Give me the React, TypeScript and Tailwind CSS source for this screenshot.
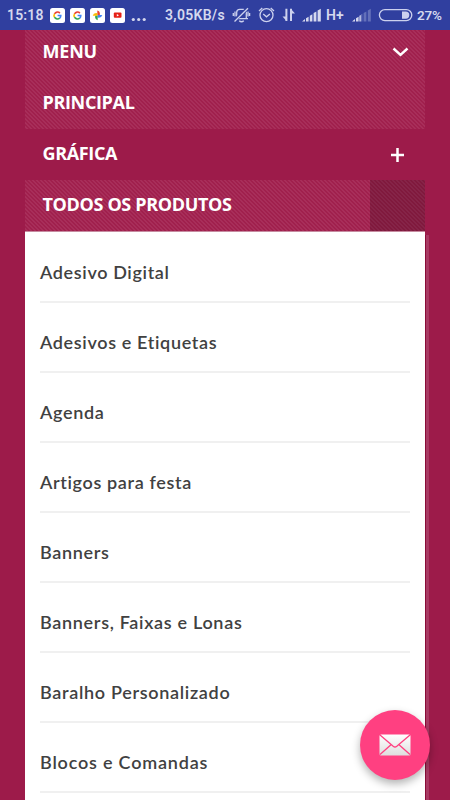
const products = [
  { name: "Adesivo Digital", spacing: "tracking-[0.64px]" },
  { name: "Adesivos e Etiquetas", spacing: "tracking-[0.65px]" },
  { name: "Agenda", spacing: "tracking-[0.66px]" },
  { name: "Artigos para festa", spacing: "tracking-[0.64px]" },
  { name: "Banners", spacing: "tracking-[0.66px]" },
  { name: "Banners, Faixas e Lonas", spacing: "tracking-[0.69px]" },
  { name: "Baralho Personalizado", spacing: "tracking-[0.69px]" },
  { name: "Blocos e Comandas", spacing: "tracking-[0.8px]" },
];

const hatch =
  "bg-[repeating-linear-gradient(45deg,#a0204d_0px,#a0204d_0.9px,#a82e5a_1.4px,#a82e5a_2.4px,#a0204d_2.828px)]";

function GoogleIcon({ x }: { x: number }) {
  return (
    <g transform={`translate(${x} 8)`} fill="none" strokeWidth="1.6">
      <rect width="15" height="15" rx="2.5" fill="#fff" />
      <path d="M9.9 5.1A3.4 3.4 0 0 0 4.5 5.8" stroke="#ea4335" />
      <path d="M4.5 5.8a3.4 3.4 0 0 0 0 3.4" stroke="#fbbc05" />
      <path d="M4.5 9.2a3.4 3.4 0 0 0 5.2.9" stroke="#34a853" />
      <path d="M9.7 10.1a3.4 3.4 0 0 0 1.1-2.6H7.6" stroke="#4285f4" />
    </g>
  );
}

function NotificationIcons() {
  return (
    <svg className="ml-[6px] shrink-0" width="98" height="30" viewBox="50 0 98 30">
      <GoogleIcon x={50} />
      <GoogleIcon x={70} />
      <rect x="90" y="8" width="15" height="15" rx="2.5" fill="#fff" />
      <path d="M97.3 15.2v-4.7q3.2.8 2.5 4.7z" fill="#ea4335" />
      <path d="M97.7 15h4.6q-.8 3.2-4.6 2.5z" fill="#4285f4" />
      <path d="M97.7 15.5v4.7q-3.2-.8-2.5-4.7z" fill="#34a853" />
      <path d="M97.3 15.7h-4.6q.8-3.2 4.6-2.5z" fill="#fbbc05" />
      <rect x="110" y="8" width="15" height="15" rx="2.5" fill="#fff" />
      <rect x="113.8" y="12.5" width="7.7" height="5.3" rx="1" fill="#e62117" />
      <path d="m116.8 13.9 2.2 1.3-2.2 1.3z" fill="#fff" />
      <g fill="#d5d8ee">
        <circle cx="133.3" cy="19.5" r="1.6" />
        <circle cx="138.7" cy="19.5" r="1.6" />
        <circle cx="144.2" cy="19.5" r="1.6" />
      </g>
    </svg>
  );
}

function StatusIcons() {
  return (
    <svg className="absolute left-[230px] top-0" width="190" height="30" viewBox="230 0 190 30" fill="none" stroke="#ccd1ee" strokeWidth="1.3">
      {/* muted bell */}
      <path d="M236.7 18.5v-6.2q0-3 3.2-3h3.2q3.2 0 3.2 3v6.2M235 18.7h13M239.2 20.7q2.3 2 4.6 0M235 11.5v5M248 11.5v5M233.3 13v3M249.6 13v3" />
      <path d="m234 21 14-13" stroke="#303f9f" strokeWidth="3.5" />
      <path d="m234.5 21.5 13.5-13.3" />
      {/* alarm */}
      <circle cx="266.5" cy="15.2" r="6.5" />
      <path d="m263.2 14 3.3 2.8 3.4-2.8M259 11l3.3-3M274 11l-3.3-3" />
      {/* data arrows */}
      <path d="M286.4 8.8v12.3M291 8.8v12.3" strokeWidth="2" />
      <path d="M282.5 16.5h4v4.6zM290.8 8.8l4.2 4.7h-4.2z" fill="#ccd1ee" stroke="none" />
      {/* first SIM */}
      <g fill="#d5d8ee" stroke="none">
        <path d="M302 21.5 305 19v2.5zM306 18.3l2.6-1.5v4.7H306zM309.8 15.8l2.6-1.6v7.3h-2.6zM313.6 13l2.8-1.6v10.1h-2.8zM317.6 10.5l3.2-1.7v12.7h-3.2z" />
      </g>
      {/* second SIM */}
      <g fill="#d5d8ee" stroke="none">
        <path d="M352 21.5 355 19v2.5zM356 18.3l2.6-1.5v4.7H356zM359.4 15.8l1.4-.8v6.5h-1.4z" />
        <path fill="#6370b9" d="M361 14.6l1.4-.8v7.7H361zM363.6 13l2.8-1.6v10.1h-2.8zM367.8 10.5l3-1.7v12.7h-3z" />
      </g>
      <rect x="379.4" y="9.6" width="32.4" height="11" rx="5.5" />
      <path d="M402 11.5h3.7a3.6 3.6 0 0 1 0 7.2H402z" fill="#ccd1ee" stroke="none" />
    </svg>
  );
}

function StatusBar() {
  return (
    <header className="relative flex h-[30px] shrink-0 items-center bg-[#303f9f] pl-[7px] font-['Roboto',sans-serif] text-[14px] font-semibold text-[#d5d8ee]">
      <span className="w-[37px] shrink-0 pt-px tracking-[0.15px]">15:18</span>
      <NotificationIcons />
      <span className="ml-[17px] w-[72px] whitespace-nowrap pt-px tracking-[0.3px]">3,05KB/s</span>
      <StatusIcons />
      <span className="ml-[89px] w-[25px] pt-px">H+</span>
      <span className="ml-[66px] pt-px text-[13.5px] tracking-[-0.2px]">27%</span>
    </header>
  );
}

function MenuHeader() {
  return (
    <nav className="whitespace-nowrap font-['Open_Sans',sans-serif] text-[18px] leading-none font-bold tracking-[-0.35px] text-white">
      <div className={`flex h-[99px] justify-between pl-[17.5px] pr-4 ${hatch}`}>
        <div className="flex flex-col gap-[33px] pt-3">
          <span className="tracking-[-0.2px]">MENU</span>
          <span>PRINCIPAL</span>
        </div>
        <svg className="mt-[15px]" width="17" height="14" viewBox="0 0 17 14" fill="none" stroke="#fff" strokeWidth="2.4">
          <path d="m1.5 3.5 7 6.3 7-6.3" />
        </svg>
      </div>
      <div className="flex h-[51px] items-center justify-between pl-[17.5px] pr-[21px]">
        <span className="pb-[3px]">GRÁFICA</span>
        <svg width="13" height="14" viewBox="0 0 13 14" stroke="#fff" strokeWidth="2.5">
          <path d="M0 7h13M6.5 0v14" />
        </svg>
      </div>
      <div className={`flex h-[51px] items-center justify-between pl-[17.5px] ${hatch}`}>
        <span className="pb-[3px]">TODOS OS PRODUTOS</span>
        <div className="h-full w-[55px] bg-black/20" />
      </div>
    </nav>
  );
}

function ProductList() {
  return (
    <ul className="h-[570px] border-t border-[#c68ba0] bg-white px-[15px] pt-px">
      {products.map(({ name, spacing }) => (
        <li
          key={name}
          className={`flex h-[70px] items-center whitespace-nowrap border-b-2 border-[#f0f0f0] pt-[11px] font-['Lato',sans-serif] text-[18px] font-semibold text-[#414141] ${spacing}`}
        >
          {name}
        </li>
      ))}
    </ul>
  );
}

function MailButton() {
  return (
    <button aria-label="Contato" className="absolute left-[360px] top-[710px] flex size-[70px] items-center justify-center rounded-full bg-[#ff4081] shadow-[0_4px_8px_rgba(0,0,0,0.3)]">
      <svg width="32" height="22" viewBox="0 0 32 22">
        <defs>
          <linearGradient id="paper" x2="0" y2="1">
            <stop stopColor="#fff" />
            <stop offset="1" stopColor="#dedede" />
          </linearGradient>
        </defs>
        <rect x=".5" y=".5" width="31" height="21" rx="1.5" fill="url(#paper)" />
        <path d="m1 1 13.2 11.3q1.8 1.4 3.6 0L31 1M1 20.5l11-9.8M31 20.5l-11-9.8" fill="none" stroke="#ff4081" strokeWidth="1.3" />
      </svg>
    </button>
  );
}

export default function App() {
  return (
    <div className="relative flex h-[800px] w-[450px] flex-col overflow-hidden bg-[#9d1b4a]">
      <StatusBar />
      <main className="flex flex-1">
        <div className="ml-[25px] w-[400px]">
          <MenuHeader />
          <ProductList />
        </div>
        <div className="mt-[205px] w-1 border-l border-[#8a0c38] bg-[#a83a63]" />
      </main>
      <MailButton />
    </div>
  );
}
